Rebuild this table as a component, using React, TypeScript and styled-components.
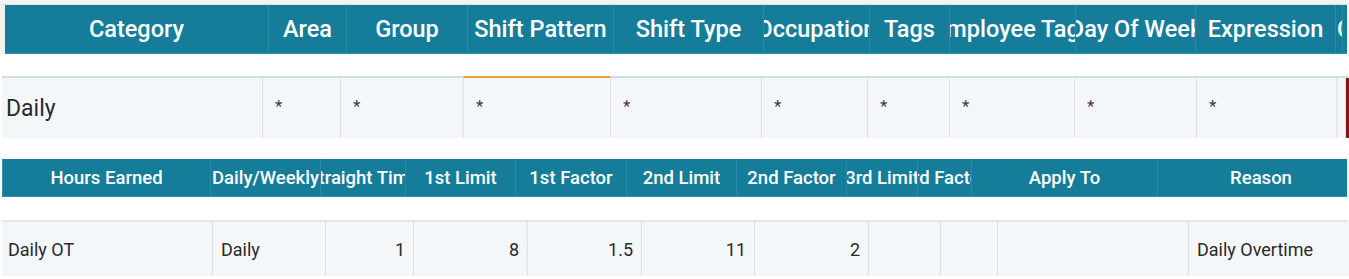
import React from 'react';
import styled, {createGlobalStyle} from 'styled-components';

const GlobalStyle = createGlobalStyle`
  html, body {
    margin: 0;
    padding: 0;
    background: #ffffff;
  }

  body {
    font-family: Roboto, "Liberation Sans", Arial, sans-serif;
  }
`;

interface HeadColumn {
    label: string;
    width: number;
    start?: boolean;
    shift?: number;
}

interface BodyCell {
    value: string;
    width: number;
    right?: boolean;
    accent?: boolean;
    fill?: boolean;
    pad?: number;
    small?: boolean;
}

const ruleHead: HeadColumn[] = [
    {label: 'Category', width: 263},
    {label: 'Area', width: 78},
    {label: 'Group', width: 121},
    {label: 'Shift Pattern', width: 146},
    {label: 'Shift Type', width: 150},
    {label: 'Occupation', width: 106},
    {label: 'Tags', width: 80},
    {label: 'Employee Tags', width: 126},
    {label: 'Day Of Week', width: 120},
    {label: 'Expression', width: 140},
    {label: 'Comment', width: 7, start: true},
    {label: '', width: 5},
];

const ruleRow: BodyCell[] = [
    {value: 'Daily', width: 260, pad: 4},
    {value: '*', width: 78, small: true},
    {value: '*', width: 123, small: true},
    {value: '*', width: 147, small: true, accent: true},
    {value: '*', width: 151, small: true},
    {value: '*', width: 106, small: true},
    {value: '*', width: 82, small: true},
    {value: '*', width: 125, small: true},
    {value: '*', width: 122, small: true},
    {value: '*', width: 140, small: true},
    {value: '', width: 9},
    {value: '', width: 2, fill: true},
];

const earnHead: HeadColumn[] = [
    {label: 'Hours Earned', width: 207},
    {label: 'Daily/Weekly', width: 110},
    {label: 'Straight Time', width: 85},
    {label: '1st Limit', width: 110},
    {label: '1st Factor', width: 111},
    {label: '2nd Limit', width: 110},
    {label: '2nd Factor', width: 110},
    {label: '3rd Limit', width: 71},
    {label: '3rd Factor', width: 54},
    {label: 'Apply To', width: 186},
    {label: 'Reason', width: 191, shift: 16},
];

const earnRow: BodyCell[] = [
    {value: 'Daily OT', width: 210, pad: 6},
    {value: 'Daily', width: 113},
    {value: '1', width: 88, right: true},
    {value: '8', width: 114, right: true},
    {value: '1.5', width: 114, right: true},
    {value: '11', width: 113, right: true},
    {value: '2', width: 114, right: true},
    {value: '', width: 72},
    {value: '', width: 57},
    {value: '', width: 191},
    {value: 'Daily Overtime', width: 159},
];

const toTemplate = (list: { width: number }[]) => list.map((c) => `${c.width}px`).join(' ');

const App = () => {
    return (
        <>
            <GlobalStyle/>
            <Page>
                <HeadFrame>
                    <HeadBar $cols={toTemplate(ruleHead)} $height={49} $size={23.5}>
                        {ruleHead.map((c, i) => (
                            <HeadCell key={i} $start={c.start} $shift={c.shift ?? 0}>
                                <span>{c.label}</span>
                            </HeadCell>
                        ))}
                    </HeadBar>
                </HeadFrame>

                <BodyRow $cols={toTemplate(ruleRow)} $gap={22} $height={62} $size={23} $offset={2}>
                    {ruleRow.map((c, i) => (
                        <BodyCell key={i} $right={c.right} $accent={c.accent} $fill={c.fill} $small={c.small}
                                  $pad={c.pad ?? 12} $line='#cfdce6'>
                            {c.value}
                        </BodyCell>
                    ))}
                </BodyRow>

                <EarnHead $cols={toTemplate(earnHead)} $height={38} $size={18.5}>
                    {earnHead.map((c, i) => (
                        <HeadCell key={i} $start={c.start} $shift={c.shift ?? 0}>
                            <span>{c.label}</span>
                        </HeadCell>
                    ))}
                </EarnHead>

                <BodyRow $cols={toTemplate(earnRow)} $gap={23} $height={56} $size={18} $offset={2}>
                    {earnRow.map((c, i) => (
                        <BodyCell key={i} $right={c.right} $pad={c.pad ?? 8} $line='#e6e6e6'>
                            {c.value}
                        </BodyCell>
                    ))}
                </BodyRow>
            </Page>
        </>
    );
};

const Page = styled.div`
  width: 1349px;
  display: flex;
  flex-direction: column;
  color: #2a2a2a;
`;

const HeadFrame = styled.div`
  width: 1342px;
  padding: 5px 0 0 5px;
  background: linear-gradient(#f4f4f4, #f4f4f4) top / 100% 4px no-repeat,
  linear-gradient(#e2e2e2, #e2e2e2) 0 4px / 100% 1px no-repeat,
  linear-gradient(#f1f1f1, #f1f1f1) left / 5px 100% no-repeat;
`;

const HeadBar = styled.div<{ $cols: string; $height: number; $size: number }>`
  display: grid;
  grid-template-columns: ${(p) => p.$cols};
  height: ${(p) => p.$height}px;
  box-sizing: border-box;
  background-color: #157d99;
  border-bottom: 1px solid #2b93b2;
  color: #ffffff;
  font-size: ${(p) => p.$size}px;
  font-weight: 500;
`;

const EarnHead = styled(HeadBar)`
  margin: 21px 0 0 2px;
  width: 1345px;
  border-left: 1px solid #2b93b2;
`;

const HeadCell = styled.div<{ $start?: boolean; $shift: number }>`
  display: flex;
  align-items: center;
  justify-content: ${(p) => p.$start ? 'flex-start' : 'center'};
  padding-left: ${(p) => p.$shift}px;
  overflow: hidden;
  white-space: nowrap;
  min-width: 0;

  & + & {
    border-left: 1px solid #2689a7;
  }

  span {
    flex-shrink: 0;
    padding-left: ${(p) => p.$start ? '1px' : '0'};
  }
`;

const BodyRow = styled.div<{ $cols: string; $gap: number; $height: number; $size: number; $offset: number }>`
  display: grid;
  grid-template-columns: ${(p) => p.$cols};
  margin: ${(p) => p.$gap}px 0 0 ${(p) => p.$offset}px;
  height: ${(p) => p.$height}px;
  font-size: ${(p) => p.$size}px;
  background-color: #f4f7fa;
`;

const BodyCell = styled.div<{
    $right?: boolean;
    $accent?: boolean;
    $fill?: boolean;
    $small?: boolean;
    $pad: number;
    $line: string
}>`
  display: flex;
  align-items: center;
  justify-content: ${(p) => p.$right ? 'flex-end' : 'flex-start'};
  padding: 0 ${(p) => p.$right ? p.$pad : 0}px ${(p) => p.$small ? 4 : 0}px ${(p) => p.$right ? 0 : p.$pad}px;
  overflow: hidden;
  white-space: nowrap;
  min-width: 0;
  font-size: ${(p) => p.$small ? '17px' : 'inherit'};
  color: ${(p) => p.$small ? '#3a3a4a' : 'inherit'};
  border-top: 2px solid ${(p) => p.$accent ? '#e9a23b' : p.$line};
  background-color: ${(p) => p.$fill ? '#8a1414' : 'transparent'};

  & + & {
    border-left: 1px solid #e0e0e0;
  }
`;

export default App;
